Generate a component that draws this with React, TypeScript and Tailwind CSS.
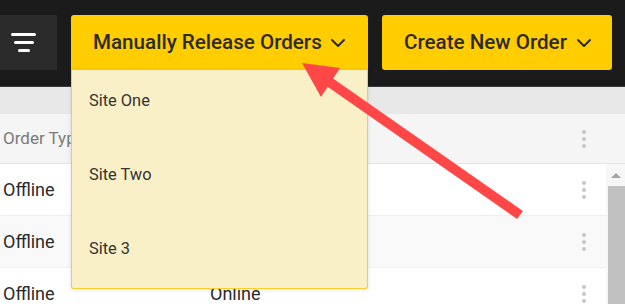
import React from 'react';
import { ChevronDown } from 'lucide-react';

const rows = [
  { type: 'Offline', channel: '', bg: 'bg-white' },
  { type: 'Offline', channel: '', bg: 'bg-[#f9f9f9]' },
  { type: 'Offline', channel: 'Online', bg: 'bg-white' },
];

const sites = ['Site One', 'Site Two', 'Site 3'];

const Kebab = () => (
  <div className="flex flex-col gap-[3px] items-center">
    <span className="w-[4px] h-[4px] rounded-full bg-[#c6c6c6]" />
    <span className="w-[4px] h-[4px] rounded-full bg-[#c6c6c6]" />
    <span className="w-[4px] h-[4px] rounded-full bg-[#c6c6c6]" />
  </div>
);

export default function App() {
  return (
    <div className="relative w-[625px] h-[304px] overflow-hidden bg-white font-['Roboto',sans-serif]">
      {/* top bar */}
      <div className="h-[87px] bg-[#1b1b1b] border-b border-[#3a3a3a] flex items-start pt-[15px] gap-[14px]">
        <button className="w-[57px] h-[55px] bg-[#2b2b2b] flex flex-col items-center justify-center gap-[5px] pr-[10px]">
          <span className="block w-[25px] h-[3px] rounded-full bg-white" />
          <span className="block w-[20px] h-[3px] rounded-full bg-white" />
          <span className="block w-[12px] h-[3px] rounded-full bg-white" />
        </button>
        <div className="relative">
          <button className="w-[297px] h-[55px] bg-[#ffcd00] rounded-t-[3px] flex items-center pl-[22px] gap-[4px] text-[20.6px] font-medium text-[#2b2b2b]">
            <span>Manually Release Orders</span>
            <ChevronDown size={24} strokeWidth={2} />
          </button>
          <div className="absolute left-0 top-[55px] w-[297px] h-[219px] bg-[#faf0c8] border-x border-b border-[#f7cf2e] rounded-b-[3px] shadow-[0_1px_4px_rgba(0,0,0,0.12)] z-10 flex flex-col pt-[21px] gap-[54px] pl-[17px]">
            {sites.map((s) => (
              <div key={s} className="h-[20px] leading-[20px] text-[16.4px] text-[#333]">{s}</div>
            ))}
          </div>
        </div>
        <button className="w-[230px] h-[55px] bg-[#ffcd00] rounded-[3px] flex items-center pl-[22px] gap-[5px] text-[20.6px] font-medium text-[#2b2b2b]">
          <span>Create New Order</span>
          <ChevronDown size={24} strokeWidth={2} />
        </button>
      </div>

      {/* strip */}
      <div className="h-[27px] bg-[#e8e8e8]" />

      {/* table header */}
      <div className="h-[50px] bg-[#f5f5f5] border-b border-[#e4e4e4] flex items-center">
        <div className="w-[210px] pl-[3px] text-[17px] text-[#7a7a7a]">Order Type</div>
        <div className="flex-1" />
        <div className="w-[20px] mr-[31px] flex justify-center"><Kebab /></div>
      </div>

      {/* rows + scrollbar */}
      <div className="flex">
        <div className="flex-1">
          {rows.map((r, i) => (
            <div key={i} className={`h-[52px] ${r.bg} border-b border-[#efefef] flex items-center`}>
              <div className="w-[210px] pl-[3px] text-[18px] text-[#2b2b2b]">{r.type}</div>
              <div className="flex-1 text-[18px] text-[#2b2b2b]">{r.channel}</div>
              <div className="w-[20px] mr-[12px] flex justify-center"><Kebab /></div>
            </div>
          ))}
        </div>
        <div className="w-[19px] bg-[#f7f7f7] flex flex-col items-end">
          <div className="w-[19px] h-[22px] flex items-center justify-center">
            <span className="w-0 h-0 border-x-[5px] border-x-transparent border-b-[5px] border-b-[#a3a3a3]" />
          </div>
          <div className="w-[17px] flex-1 min-h-[140px] bg-[#c1c1c1]" />
        </div>
      </div>

      {/* annotation arrow */}
      <svg className="absolute inset-0 z-20 pointer-events-none" width="625" height="304">
        <line x1="328" y1="81" x2="520" y2="215" stroke="#ff4747" strokeWidth="10" />
        <polygon points="302,63 340,68 321,97" fill="#ff4747" />
      </svg>
    </div>
  );
}
